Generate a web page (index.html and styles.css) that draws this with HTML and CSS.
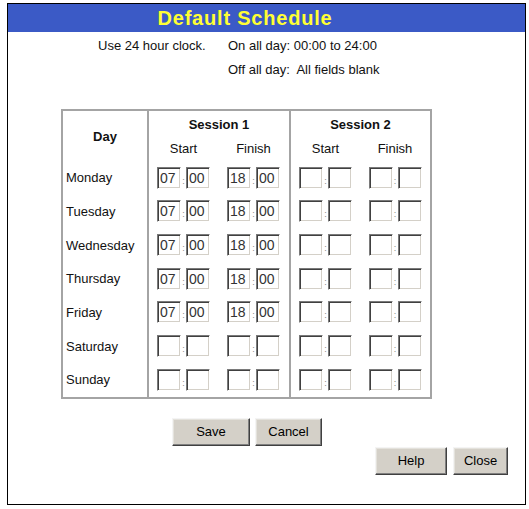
FILE: index.html
```html
<!DOCTYPE html>
<html lang="en">
<head>
<meta charset="utf-8">
<title>Default Schedule</title>
<link rel="stylesheet" href="styles.css">
</head>
<body>
<div class="frame">
  <div class="titlebar"><h1 class="title">Default Schedule</h1></div>

  <div class="notes">
    <div class="note-left">Use 24 hour clock.</div>
    <div class="note-right">
      <div>On all day: 00:00 to 24:00</div>
      <div>Off all day:&nbsp; All fields blank</div>
    </div>
  </div>

  <div class="sched">
    <div class="cell hd day-hd">Day</div>
    <div class="cell hd sess s1">Session 1</div>
    <div class="cell hd sess s2">Session 2</div>
    <div class="cell sub">Start</div>
    <div class="cell sub sep">Finish</div>
    <div class="cell sub">Start</div>
    <div class="cell sub">Finish</div>

    <div class="cell day">Monday</div>
    <div class="cell"><div class="time"><input class="tb" value="07"><span class="colon">:</span><input class="tb" value="00"></div></div>
    <div class="cell sep"><div class="time"><input class="tb" value="18"><span class="colon">:</span><input class="tb" value="00"></div></div>
    <div class="cell"><div class="time"><input class="tb" value=""><span class="colon">:</span><input class="tb" value=""></div></div>
    <div class="cell"><div class="time"><input class="tb" value=""><span class="colon">:</span><input class="tb" value=""></div></div>

    <div class="cell day">Tuesday</div>
    <div class="cell"><div class="time"><input class="tb" value="07"><span class="colon">:</span><input class="tb" value="00"></div></div>
    <div class="cell sep"><div class="time"><input class="tb" value="18"><span class="colon">:</span><input class="tb" value="00"></div></div>
    <div class="cell"><div class="time"><input class="tb" value=""><span class="colon">:</span><input class="tb" value=""></div></div>
    <div class="cell"><div class="time"><input class="tb" value=""><span class="colon">:</span><input class="tb" value=""></div></div>

    <div class="cell day">Wednesday</div>
    <div class="cell"><div class="time"><input class="tb" value="07"><span class="colon">:</span><input class="tb" value="00"></div></div>
    <div class="cell sep"><div class="time"><input class="tb" value="18"><span class="colon">:</span><input class="tb" value="00"></div></div>
    <div class="cell"><div class="time"><input class="tb" value=""><span class="colon">:</span><input class="tb" value=""></div></div>
    <div class="cell"><div class="time"><input class="tb" value=""><span class="colon">:</span><input class="tb" value=""></div></div>

    <div class="cell day">Thursday</div>
    <div class="cell"><div class="time"><input class="tb" value="07"><span class="colon">:</span><input class="tb" value="00"></div></div>
    <div class="cell sep"><div class="time"><input class="tb" value="18"><span class="colon">:</span><input class="tb" value="00"></div></div>
    <div class="cell"><div class="time"><input class="tb" value=""><span class="colon">:</span><input class="tb" value=""></div></div>
    <div class="cell"><div class="time"><input class="tb" value=""><span class="colon">:</span><input class="tb" value=""></div></div>

    <div class="cell day">Friday</div>
    <div class="cell"><div class="time"><input class="tb" value="07"><span class="colon">:</span><input class="tb" value="00"></div></div>
    <div class="cell sep"><div class="time"><input class="tb" value="18"><span class="colon">:</span><input class="tb" value="00"></div></div>
    <div class="cell"><div class="time"><input class="tb" value=""><span class="colon">:</span><input class="tb" value=""></div></div>
    <div class="cell"><div class="time"><input class="tb" value=""><span class="colon">:</span><input class="tb" value=""></div></div>

    <div class="cell day">Saturday</div>
    <div class="cell"><div class="time"><input class="tb" value=""><span class="colon">:</span><input class="tb" value=""></div></div>
    <div class="cell sep"><div class="time"><input class="tb" value=""><span class="colon">:</span><input class="tb" value=""></div></div>
    <div class="cell"><div class="time"><input class="tb" value=""><span class="colon">:</span><input class="tb" value=""></div></div>
    <div class="cell"><div class="time"><input class="tb" value=""><span class="colon">:</span><input class="tb" value=""></div></div>

    <div class="cell day">Sunday</div>
    <div class="cell"><div class="time"><input class="tb" value=""><span class="colon">:</span><input class="tb" value=""></div></div>
    <div class="cell sep"><div class="time"><input class="tb" value=""><span class="colon">:</span><input class="tb" value=""></div></div>
    <div class="cell"><div class="time"><input class="tb" value=""><span class="colon">:</span><input class="tb" value=""></div></div>
    <div class="cell"><div class="time"><input class="tb" value=""><span class="colon">:</span><input class="tb" value=""></div></div>
  </div>

  <div class="btnrow main-btns">
    <button class="btn btn-save" type="button">Save</button>
    <button class="btn btn-cancel" type="button">Cancel</button>
  </div>
  <div class="btnrow aux-btns">
    <button class="btn btn-help" type="button">Help</button>
    <button class="btn btn-close" type="button">Close</button>
  </div>
</div>
</body>
</html>
```

FILE: styles.css
```css
html, body {
  margin: 0;
  padding: 0;
  background: #ffffff;
}

body {
  font-family: "Liberation Sans", Arial, sans-serif;
  font-size: 13px;
  color: #111;
}

.frame {
  box-sizing: border-box;
  margin: 3px 0 0 7px;
  width: 519px;
  height: 502px;
  border: 1px solid #000;
  display: flex;
  flex-direction: column;
}

.titlebar {
  height: 28px;
  background: #3b5ac6;
  display: flex;
  align-items: center;
  justify-content: center;
  padding-right: 43px;
}

.title {
  margin: 0;
  font-size: 20px;
  font-weight: bold;
  letter-spacing: 0.8px;
  color: #ffff33;
  line-height: 28px;
}

.notes {
  display: flex;
  margin: 2px 0 0 90px;
  line-height: 24px;
}

.note-left {
  width: 130px;
}

.sched {
  box-sizing: border-box;
  width: 371px;
  margin: 27px 0 0 53px;
  border: 2px solid #a4a4a4;
  display: grid;
  grid-template-columns: 86px 69px 73px 69px 70px;
  grid-template-rows: 25px 25px repeat(7, 33.67px);
}

.cell {
  box-sizing: border-box;
  display: flex;
  align-items: center;
  justify-content: center;
  white-space: nowrap;
}

.hd {
  font-weight: bold;
}

.day-hd {
  grid-row: 1 / span 2;
  border-right: 2px solid #a4a4a4;
}

.s1 {
  grid-column: 2 / span 2;
  border-right: 2px solid #a4a4a4;
}

.s2 {
  grid-column: 4 / span 2;
}

.sess {
  padding-top: 2px;
}

.sep {
  border-right: 2px solid #a4a4a4;
}

.day {
  justify-content: flex-start;
  padding-left: 3px;
  border-right: 2px solid #a4a4a4;
}

.time {
  display: flex;
  align-items: center;
}

.tb {
  box-sizing: border-box;
  width: 24px;
  height: 22px;
  margin: 0;
  padding: 0 0 0 2px;
  font-family: "Liberation Sans", Arial, sans-serif;
  font-size: 14px;
  color: #333;
  background: #fff;
  border: 1px solid;
  border-color: #7a7a7a #fff #fff #7a7a7a;
  box-shadow: inset 1px 1px 0 #404040, inset -1px -1px 0 #d4d0c8;
  outline: none;
}

.colon {
  width: 5px;
  text-align: center;
  font-size: 9px;
  color: #888;
  line-height: 1;
  padding-top: 7px;
}

.btnrow {
  display: flex;
  gap: 5px;
}

.main-btns {
  margin: 19px 0 0 164px;
}

.aux-btns {
  margin-top: 1px;
  justify-content: flex-end;
  gap: 6px;
  padding-right: 17px;
}

.btn {
  box-sizing: border-box;
  height: 28px;
  padding: 0;
  font-family: "Liberation Sans", Arial, sans-serif;
  font-size: 13px;
  color: #000;
  background: #d4d0c8;
  border: 1px solid;
  border-color: #f4f4f4 #404040 #404040 #f4f4f4;
  box-shadow: inset -1px -1px 0 #808080, inset 1px 1px 0 #e4e2dc;
}

.btn-save { width: 78px; }
.btn-cancel { width: 67px; }
.btn-help { width: 72px; }
.btn-close { width: 55px; }
```
